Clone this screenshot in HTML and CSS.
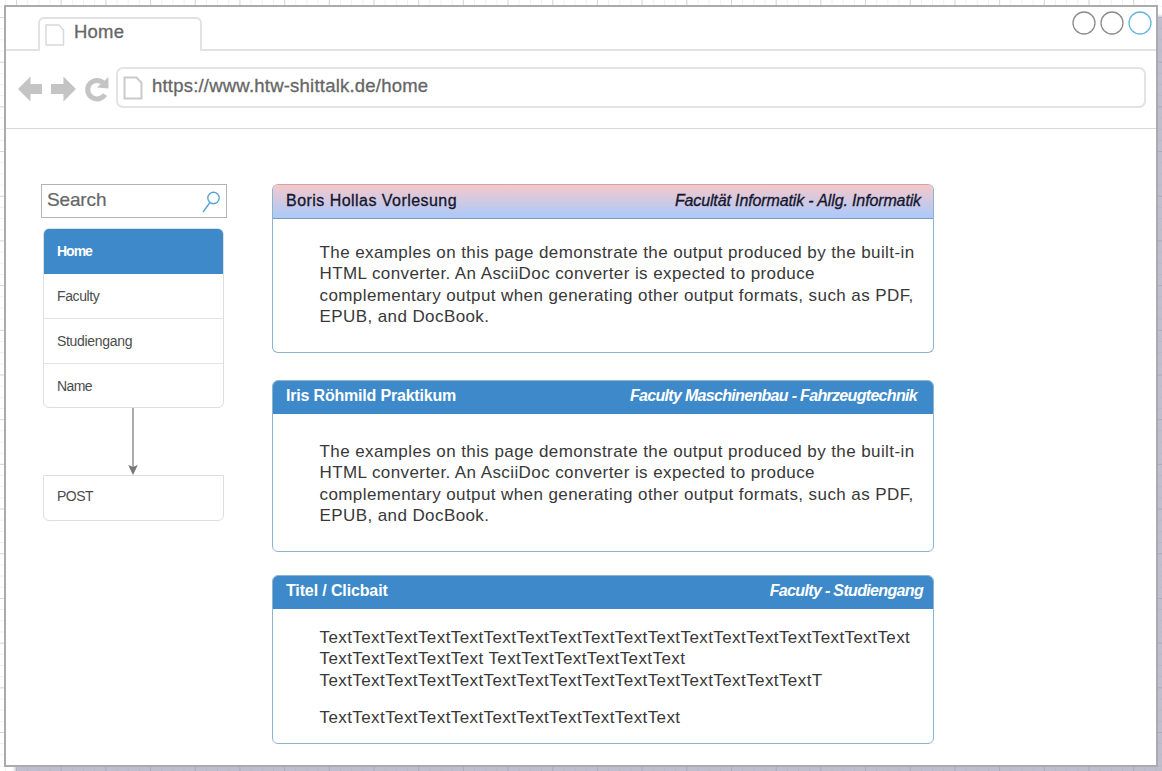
FILE: index.html
```html
<!DOCTYPE html>
<html lang="en">
<head>
<meta charset="utf-8">
<title>Home</title>
<link rel="stylesheet" href="styles.css">
</head>
<body>
<div class="window">
  <header class="tabs">
    <div class="tab">
      <svg class="tab-icon" width="20" height="22" viewBox="0 0 20 22"><path d="M1 1H14L18.500 6V21H1Z"/></svg>
      <span class="tab-title">Home</span>
    </div>
    <div class="tab-rest">
      <svg class="controls" width="82" height="26" viewBox="0 0 82 26"><circle cx="13" cy="13" r="11"/><circle cx="41" cy="13" r="11"/><circle class="blue" cx="69" cy="13" r="11"/></svg>
    </div>
  </header>
  <div class="toolbar">
    <svg class="nav" width="92" height="28" viewBox="0 0 92 28">
      <path d="M0 14L12.500 1.500V9H24V19H12.500V26.500Z"/>
      <path d="M58 14L45.500 1.500V9H33V19H45.500V26.500Z"/>
      <path class="reload" d="M87 19.500A9.300 9.300 0 1 1 86 8.500"/>
      <path d="M90.500 2L90.500 13.500L79 12.500Z"/>
    </svg>
    <div class="address">
      <svg class="page-icon" width="20" height="24" viewBox="0 0 20 24"><path d="M1.500 1.500H13.500L18.500 7V22.500H1.500Z"/></svg>
      <span class="url">https://www.htw-shittalk.de/home</span>
    </div>
  </div>
  <main class="content">
    <aside class="side">
      <div class="search"><span class="search-label">Search</span>
        <svg class="lens" width="18" height="22" viewBox="0 0 18 22"><circle cx="11.500" cy="7" r="5.700"/><path d="M8 11.500L1 21"/></svg>
      </div>
      <nav class="menu">
        <div class="item active"><span class="t-home">Home</span></div>
        <div class="item"><span class="t-faculty">Faculty</span></div>
        <div class="item"><span class="t-studi">Studiengang</span></div>
        <div class="item"><span class="t-name">Name</span></div>
      </nav>
      <svg class="arrow" width="12" height="67" viewBox="0 0 12 67"><path class="stem" d="M6 0V60"/><path d="M1.200 57L6 59L10.800 57L6 67Z"/></svg>
      <div class="post"><span class="t-post">POST</span></div>
    </aside>
    <section class="cards">
      <article class="card first">
        <header class="head"><span class="h-boris">Boris Hollas Vorlesung</span><em class="m-info">Facultät Informatik - Allg. Informatik</em></header>
        <p class="text">The examples on this page demonstrate the output produced by the built-in<br>HTML converter. An AsciiDoc converter is expected to produce<br>complementary output when generating other output formats, such as PDF,<br>EPUB, and DocBook.</p>
      </article>
      <article class="card second">
        <header class="head"><span class="h-iris">Iris Röhmild Praktikum</span><em class="m-masch">Faculty Maschinenbau - Fahrzeugtechnik</em></header>
        <p class="text">The examples on this page demonstrate the output produced by the built-in<br>HTML converter. An AsciiDoc converter is expected to produce<br>complementary output when generating other output formats, such as PDF,<br>EPUB, and DocBook.</p>
      </article>
      <article class="card third">
        <header class="head"><span class="h-titel">Titel / Clicbait</span><em class="m-studi">Faculty - Studiengang</em></header>
        <p class="text">TextTextTextTextTextTextTextTextTextTextTextTextTextTextTextTextTextText<br>TextTextTextTextText TextTextTextTextTextText<br>TextTextTextTextTextTextTextTextTextTextTextTextTextTextTextT</p>
        <p class="text last">TextTextTextTextTextTextTextTextTextTextText</p>
      </article>
    </section>
  </main>
</div>
</body>
</html>
```

FILE: styles.css
```css
* { box-sizing: border-box; }
body {
  margin: 0;
  width: 1162px;
  height: 771px;
  padding: 5px 4px 4px;
  overflow: hidden;
  font-family: "Liberation Sans", Arial, sans-serif;
  background-color: #fff;
  background-image:
    linear-gradient(90deg, #d8d8dc 1px, transparent 1px),
    linear-gradient(#d8d8dc 1px, transparent 1px),
    linear-gradient(90deg, #f0f0f2 1px, transparent 1px),
    linear-gradient(#f0f0f2 1px, transparent 1px);
  background-size: 44.700px 44.700px, 44.700px 44.700px, 11.175px 11.175px, 11.175px 11.175px;
  background-position: 16px 17px;
}
.window {
  width: 1154px;
  height: 762px;
  border: 2px solid #ababaf;
  background: #fff;
  box-shadow: 9px 9px 3px -2px rgba(125, 125, 155, .5);
}
.tabs { display: flex; height: 44px; padding-top: 10px; background: linear-gradient(#e2e2e2, #e2e2e2) left bottom / 32px 2px no-repeat; }
.tab {
  display: flex;
  align-items: flex-start;
  width: 164px;
  margin-left: 32px;
  padding: 5px 0 0 5px;
  border: 2px solid #e2e2e2;
  border-bottom: 0;
  border-radius: 6px 6px 0 0;
}
.tab-icon path { fill: #fff; stroke: #d9d9d9; stroke-width: 1.500; }
.tab-title { margin-left: 9px; margin-top: -4px; font-size: 18.500px; line-height: 23px; color: #666; letter-spacing: .2px; -webkit-text-stroke: .3px #666; }
.tab-rest { flex: 1; display: flex; justify-content: flex-end; border-bottom: 2px solid #e2e2e2; }
.controls { margin: -7px 3px 0 0; overflow: visible; }
.controls circle { fill: #fff; stroke: #8c8c8c; stroke-width: 1.300; }
.controls .blue { stroke: #69b5df; }
.toolbar { display: flex; height: 78px; padding: 16px 10px 0 12px; border-bottom: 1.500px solid #d8d8d8; }
.nav { margin-top: 8px; fill: #c4c4c4; }
.nav .reload { fill: none; stroke: #c4c4c4; stroke-width: 5; }
.address { display: flex; width: 1031px; height: 41px; margin-left: 6px; padding: 7px 5px; border: 2px solid #e3e3e3; border-radius: 7px; }
.page-icon path { fill: #fff; stroke: #cacaca; stroke-width: 2; }
.url { margin: -1px 0 0 9px; font-size: 18.500px; line-height: 22px; letter-spacing: .22px; color: #666; white-space: nowrap; -webkit-text-stroke: .3px #666; }
.content { display: flex; padding: 55px 0 0 35px; }
.side { width: 186px; display: flex; flex-direction: column; }
.search { display: flex; justify-content: space-between; height: 34px; padding: 3px 6px 0 5px; border: 1.500px solid #b4b4b4; color: #666; }
.search-label { font-size: 19px; line-height: 23px; letter-spacing: -.15px; -webkit-text-stroke: .2px #666; }
.lens { margin-top: 3px; fill: none; stroke: #5ba3d6; stroke-width: 1.400; }
.menu { width: 181px; height: 180px; margin: 10px 0 0 2px; border: 1px solid #dedede; border-radius: 6px; overflow: hidden; }
.item { height: 45px; padding: 14px 0 0 13px; border-bottom: 1px solid #e4e4e4; font-size: 14px; line-height: 17px; color: #4c4c4c; }
.item:last-child { border-bottom: 0; }
.item.active { background: #3d89ca; color: #fff; font-weight: bold; border-color: #3d89ca; }
.t-home { letter-spacing: -1px; }
.t-faculty { letter-spacing: -.4px; }
.t-studi { letter-spacing: -.32px; }
.t-name { letter-spacing: -.6px; }
.t-post { letter-spacing: -.5px; }
.arrow { margin: 0 0 0 86px; fill: #777; }
.arrow .stem { fill: none; stroke: #888; stroke-width: 1.400; }
.post { width: 181px; height: 46px; margin-left: 2px; padding: 12px 0 0 13px; border: 1px solid #dedede; border-radius: 0 0 6px 6px; font-size: 14px; line-height: 17px; color: #4c4c4c; }
.cards { width: 662px; margin-left: 45px; }
.card { border: 1.500px solid #8db3cf; border-radius: 6px; background: #fff; overflow: hidden; }
.first { height: 169px; border-top-color: #d9a0a4; }
.second { height: 172px; margin-top: 27px; }
.third { height: 169px; margin-top: 23px; }
.head { display: flex; justify-content: space-between; height: 33px; padding: 6px 10px 0 13px; background: #3d89ca; color: #fff; font-size: 16px; line-height: 18px; font-weight: bold; white-space: nowrap; }
.first .head { height: 34px; padding: 7px 12px 0 13px; background: linear-gradient(#f5c8cb, #a9cafa); border-bottom: 1px solid #8795b6; color: #15152c; font-weight: normal; -webkit-text-stroke: .3px #15152c; }
.second .head { padding-right: 16px; }
.h-boris { letter-spacing: .46px; }
.m-info { letter-spacing: -.13px; }
.h-iris { letter-spacing: -.19px; }
.m-masch { letter-spacing: -.68px; }
.h-titel { letter-spacing: -.13px; }
.m-studi { letter-spacing: -.66px; }
.text { margin: 23px 0 0 46.500px; font-size: 17px; line-height: 21.400px; color: #383838; white-space: nowrap; letter-spacing: .41px; }
.second .text { margin-top: 27px; }
.third .text { margin-top: 18px; }
.third .last { margin-top: 16px; }
```
